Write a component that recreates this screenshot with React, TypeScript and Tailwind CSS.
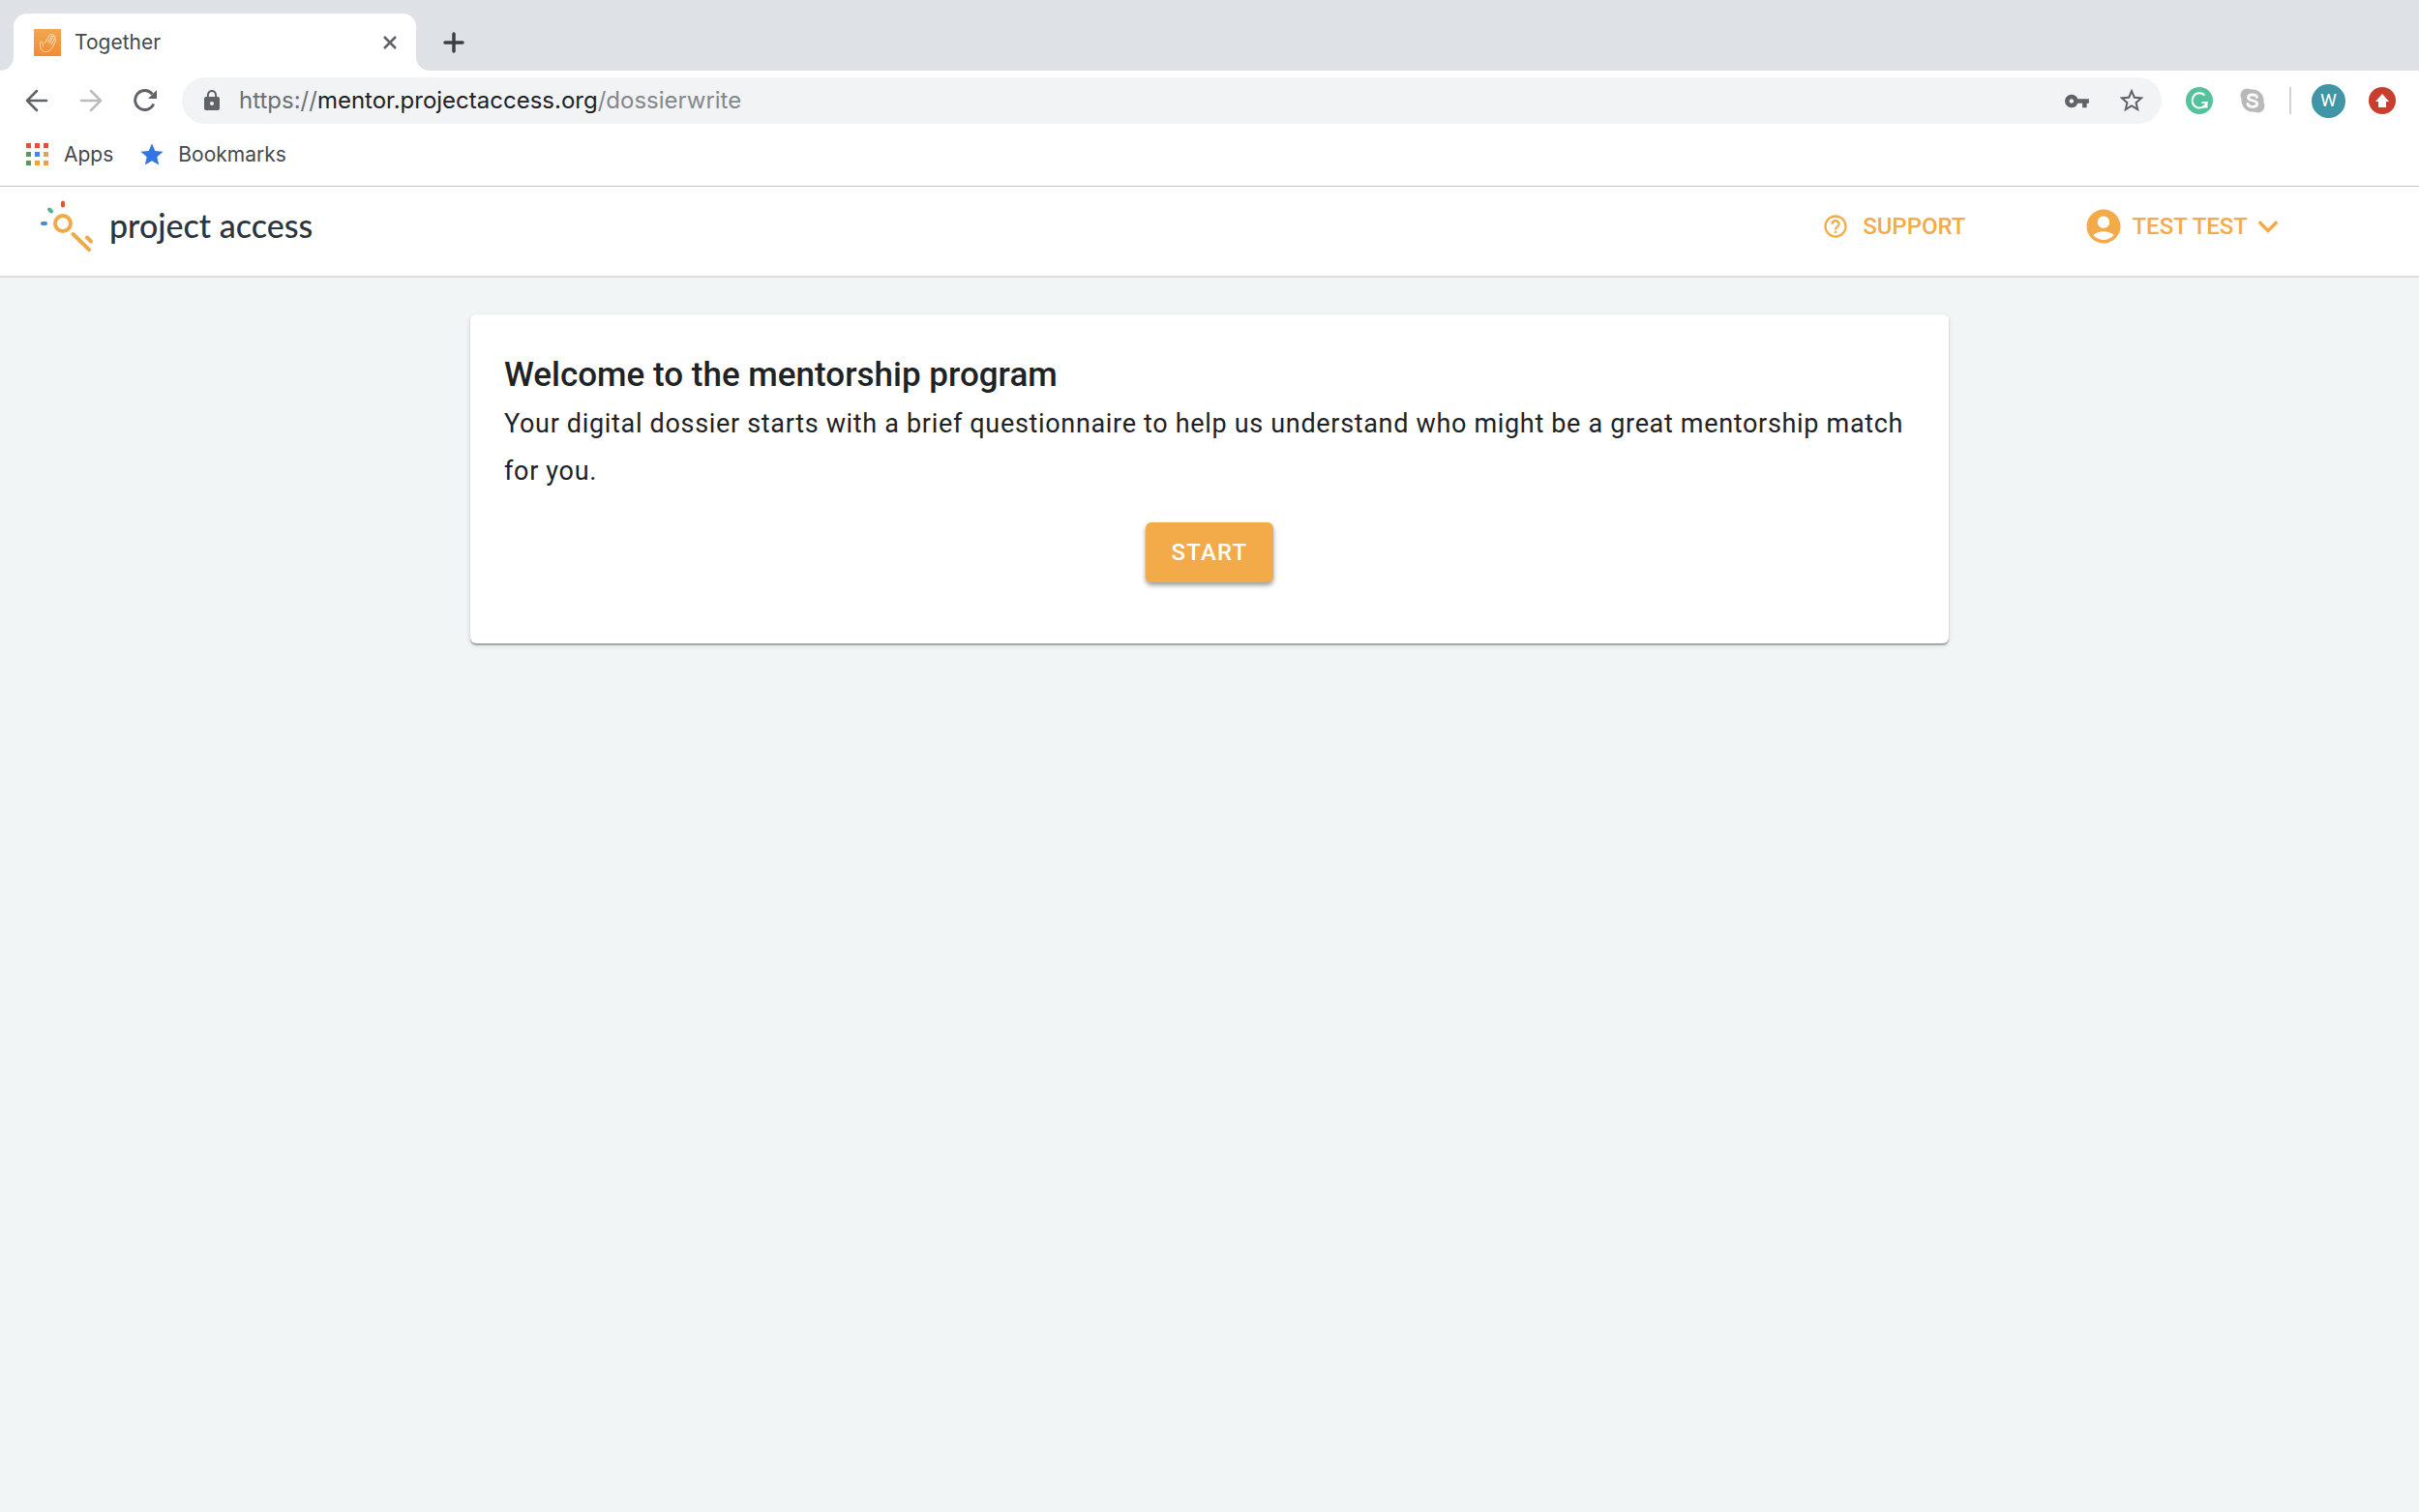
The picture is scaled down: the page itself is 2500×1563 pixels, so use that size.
import type { ReactNode } from "react";
import {
  MdAccountCircle,
  MdExpandMore,
  MdHelpOutline,
  MdLock,
  MdStar,
  MdStarOutline,
  MdVpnKey,
} from "react-icons/md";

const appColors = [
  "bg-[#e94b3c]",
  "bg-[#e94b3c]",
  "bg-[#e94b3c]",
  "bg-[#529b5c]",
  "bg-[#4285f4]",
  "bg-[#e8a33b]",
  "bg-[#529b5c]",
  "bg-[#e8a33b]",
  "bg-[#e8a33b]",
];

interface IconButtonProps {
  label: string;
  className?: string;
  children: ReactNode;
}

const IconButton = ({ label, className = "", children }: IconButtonProps) => (
  <button
    type="button"
    aria-label={label}
    className={`flex shrink-0 items-center justify-center ${className}`}
  >
    {children}
  </button>
);

const TabCurve = ({ flip = false }: { flip?: boolean }) => (
  <svg
    viewBox="0 0 14 14"
    className={`size-3.5 shrink-0 text-white ${flip ? "-scale-x-100" : ""}`}
    fill="currentColor"
  >
    <path d="M14 0v14H0A14 14 0 0 0 14 0z" />
  </svg>
);

const HandIcon = () => (
  <svg
    viewBox="0 0 28 28"
    className="size-7 shrink-0 bg-linear-to-b from-[#f2a650] to-[#f28b30]"
    fill="none"
    stroke="#fde3c4"
    strokeWidth="1"
    strokeLinecap="round"
    strokeLinejoin="round"
  >
    <path d="M9.500 17.500C9.300 15 8.600 12.600 7.400 12.800c-1.600.3-.9 3.600-.7 5.700.3 3.300 2.600 5.300 5.700 5.200 3.300-.1 5.400-2.300 7-5.200l3.200-6.200c.7-1.500-.9-2.300-1.800-1l1.200-2.600c.6-1.500-1.100-2.300-1.900-1l.3-.7c.6-1.400-1.200-2.100-1.900-.8-.1-1.200-1.500-1.200-2 -.2l-5.300 8.500" />
    <path d="M18.500 7L14.500 13.800M20.100 7.700l-4 7M20.800 11.300l-2.800 4.500" />
  </svg>
);

const ProjectLogo = () => (
  <svg
    viewBox="0 0 56 54"
    className="h-[54px] w-14 shrink-0"
    fill="none"
    strokeLinecap="round"
  >
    <circle cx="24" cy="24" r="8" stroke="#ecaa49" strokeWidth="4" />
    <path d="M34.500 35L51 51M49 38.500l4 4" stroke="#ecaa49" strokeWidth="4" />
    <path d="M24 2.500v3" stroke="#dc5531" strokeWidth="4" />
    <path d="M10 9.500l2 2" stroke="#52b095" strokeWidth="4" />
    <path d="M3 24h3" stroke="#5089c9" strokeWidth="4" />
  </svg>
);

const TabStrip = () => (
  <div className="flex h-[73px] items-end bg-[#dee1e6]">
    <TabCurve />
    <div className="flex h-[59px] w-[416px] items-center rounded-t-[14px] bg-white pr-5 pl-[21px]">
      <HandIcon />
      <span className="ml-3.5 flex-1 text-[21px] text-[#45494d]">Together</span>
      <IconButton label="Close tab">
        <svg viewBox="0 0 14 14" className="size-3.5" stroke="#5f6368" strokeWidth="2.500">
          <path d="M1 1l12 12M13 1L1 13" />
        </svg>
      </IconButton>
    </div>
    <TabCurve flip />
    <IconButton label="New tab" className="ml-3.5 h-[59px]">
      <svg
        viewBox="0 0 22 22"
        className="size-[22px]"
        stroke="#3c4043"
        strokeWidth="3.500"
        strokeLinecap="round"
      >
        <path d="M11 2v18M2 11h18" />
      </svg>
    </IconButton>
  </div>
);

const AddressBar = () => (
  <div className="flex h-12 min-w-0 flex-1 items-center rounded-full bg-[#f1f3f4] pr-4 pl-[19px]">
    <MdLock className="size-6 shrink-0 text-[#5f6368]" />
    <div
      role="textbox"
      aria-label="Address"
      contentEditable
      suppressContentEditableWarning
      spellCheck={false}
      className="ml-4 min-w-0 flex-1 truncate text-[24px] text-[#83888d]"
    >
      <span className="text-[#6b7075]">https://</span>
      <span className="text-[#202124]">mentor.projectaccess.org</span>
      <span>/dossierwrite</span>
    </div>
    <div className="flex items-center gap-7">
      <IconButton label="Saved passwords">
        <MdVpnKey className="size-[27px] text-[#5f6368]" />
      </IconButton>
      <IconButton label="Bookmark this page">
        <MdStarOutline className="size-[30px] text-[#5f6368]" />
      </IconButton>
    </div>
  </div>
);

const Toolbar = () => (
  <div className="flex h-[62px] items-center pr-6 pl-[26px]">
    <div className="flex items-center gap-8">
      <IconButton label="Back">
        <svg viewBox="0 0 24 24" className="size-6" fill="none" stroke="#5f6368" strokeWidth="2.500" strokeLinecap="round" strokeLinejoin="round">
          <path d="M22 12H2M12 2L2 12l10 10" />
        </svg>
      </IconButton>
      <IconButton label="Forward">
        <svg viewBox="0 0 24 24" className="size-6" fill="none" stroke="#babcbe" strokeWidth="2.500" strokeLinecap="round" strokeLinejoin="round">
          <path d="M2 12h20M12 2l10 10-10 10" />
        </svg>
      </IconButton>
      <IconButton label="Reload">
        <svg viewBox="0 0 24 24" className="size-6" fill="none" stroke="#5f6368" strokeWidth="2.800">
          <path d="M20.800 15.500A10 10 0 1 1 19.500 5.300" />
          <path d="M24 1v9h-9z" fill="#5f6368" stroke="none" />
        </svg>
      </IconButton>
    </div>
    <div className="ml-[26px] flex min-w-0 flex-1 items-center">
      <AddressBar />
      <div className="ml-[25px] flex items-center">
        <IconButton label="Grammarly">
          <svg viewBox="0 0 28 28" className="size-7" fill="none" stroke="white" strokeWidth="2">
            <circle cx="14" cy="14" r="14" fill="#55c29b" stroke="none" />
            <path d="M19.500 8.500a7.600 7.600 0 1 0 2 7.500h-5" />
            <path d="M17.500 20.500h4v-4.500" />
          </svg>
        </IconButton>
        <IconButton label="Skype" className="ml-7">
          <svg viewBox="0 0 26 26" className="size-[26px]" fill="#b9b9b9">
            <circle cx="13" cy="13" r="11.500" />
            <circle cx="7.500" cy="7.500" r="7" />
            <circle cx="18.500" cy="18.500" r="7" />
            <path
              d="M17.500 9.500C16.500 5.800 8.500 6 8.500 9.700c0 4.400 9.200 2.200 9.200 6.500 0 4-8.700 4.200-9.700.3"
              fill="none"
              stroke="white"
              strokeWidth="2.800"
              strokeLinecap="round"
            />
          </svg>
        </IconButton>
        <span className="ml-[25px] h-7 w-0.5 bg-[#d0d2d4]" />
        <button
          type="button"
          className="ml-[21px] size-[35px] shrink-0 rounded-full bg-[#4095a7] font-[Roboto] text-[19px] text-white"
        >
          W
        </button>
        <IconButton label="Update" className="ml-6">
          <svg viewBox="0 0 28 28" className="size-7" fill="white">
            <circle cx="14" cy="14" r="14" fill="#c93f2f" />
            <path d="M14 7l7 8h-3v6h-8v-6H7z" />
          </svg>
        </IconButton>
      </div>
    </div>
  </div>
);

const BookmarksBar = () => (
  <nav className="flex h-[58px] items-center border-b border-[#c4c4c4] px-[27px] pb-2 text-[21px] text-[#45494d]">
    <a href="#apps" className="flex items-center gap-4">
      <span className="grid grid-cols-3 gap-1">
        {appColors.map((color, i) => (
          <span key={i} className={`size-[5px] ${color}`} />
        ))}
      </span>
      Apps
    </a>
    <a href="#bookmarks" className="ml-[26px] flex items-center gap-[13px]">
      <MdStar className="size-7 text-[#3376e1]" />
      Bookmarks
    </a>
  </nav>
);

const SiteHeader = () => (
  <header className="flex h-[94px] items-center justify-between border-b-2 border-[#dcdedf] bg-white pr-[135px] pb-2.5 pl-[41px]">
    <a href="#home" className="flex items-center gap-4 font-[Lato] text-[34px] font-medium text-[#2d353c]">
      <ProjectLogo />
      <span className="pb-1">project access</span>
    </a>
    <div className="flex items-center gap-[122px] font-[Roboto] text-[24px] font-medium text-[#f3aa49]">
      <button type="button" className="flex items-center gap-3.5">
        <MdHelpOutline className="size-7" />
        SUPPORT
      </button>
      <button type="button" className="flex items-center">
        <MdAccountCircle className="mr-2 size-[42px]" />
        TEST TEST
        <MdExpandMore className="size-[42px]" />
      </button>
    </div>
  </header>
);

const App = () => {
  return (
    <div className="flex min-h-screen flex-col bg-[#f1f5f6] font-[Inter,sans-serif]">
      <div className="bg-white">
        <TabStrip />
        <Toolbar />
        <BookmarksBar />
      </div>
      <SiteHeader />
      <main className="px-6 pt-[38px] font-[Roboto,sans-serif] text-[#212223]">
        <section className="mx-auto max-w-[1528px] rounded-md bg-white px-[35px] pt-9 pb-[63px] shadow-[0_2px_1px_rgba(0,0,0,0.25),0_2px_5px_rgba(0,0,0,0.15)]">
          <h1 className="text-[35px] leading-[53px] font-medium">
            Welcome to the mentorship program
          </h1>
          <p className="text-[27px] leading-[49px] tracking-wide">
            Your digital dossier starts with a brief questionnaire to help us
            understand who might be a great mentorship match for you.
          </p>
          <div className="mt-7 flex justify-center">
            <button
              type="button"
              className="h-[62px] rounded-md bg-[#f3aa49] px-[27px] text-[24px] font-medium tracking-wider text-white shadow-[0_3px_5px_rgba(0,0,0,0.4)]"
            >
              START
            </button>
          </div>
        </section>
      </main>
    </div>
  );
};

export default App;
